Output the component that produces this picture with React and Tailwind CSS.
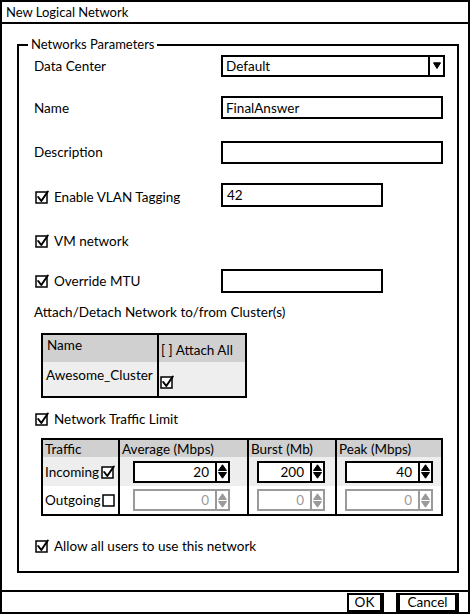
import React from "react";

function Check({ checked = true }) {
  return (
    <svg width="14" height="14" viewBox="0 0 14 14" className="shrink-0">
      <rect x="1" y="2" width="11" height="11" fill="white" stroke="black" strokeWidth="1.5" />
      {checked && (
        <path d="M3.2 7 L6.3 11 L12.8 1.5" fill="none" stroke="black" strokeWidth="2" strokeLinejoin="round" strokeLinecap="round" />
      )}
    </svg>
  );
}

function Arrows({ color }) {
  return (
    <svg width="9" height="15" viewBox="0 0 9 15">
      <path d="M0.5 6.5 L4.5 0.8 L8.5 6.5 Z" fill={color} stroke={color} strokeWidth="1" strokeLinejoin="round" />
      <path d="M0.5 8.5 L4.5 14.2 L8.5 8.5 Z" fill={color} stroke={color} strokeWidth="1" strokeLinejoin="round" />
    </svg>
  );
}

function Spinner({ value, w, ml, disabled }) {
  const c = disabled ? "border-[#9a9a9a] text-[#9a9a9a]" : "border-black text-black";
  return (
    <div className={`flex h-[22px] ${w} ${ml}`}>
      <div className={`flex-1 border-2 ${c} bg-white flex items-center justify-end pr-[6px]`}>{value}</div>
      <div className={`w-[13px] border-2 border-l-0 ${c} bg-white flex items-center justify-center`}>
        <Arrows color={disabled ? "#9a9a9a" : "#000"} />
      </div>
    </div>
  );
}

function CheckRow({ label, mt, h, children, labelPt = "" }) {
  return (
    <div className={`flex items-center ${mt} ${h}`}>
      <div className={`w-[187px] shrink-0 flex items-center gap-[5px] pl-[1px] whitespace-nowrap ${labelPt}`}>
        <Check />
        <span>{label}</span>
      </div>
      {children}
    </div>
  );
}

export default function App() {
  return (
    <div className="w-[472px] h-[616px] bg-white font-['Lato',sans-serif] text-[13.5px] leading-[18px] text-black">
      <div className="w-[470px] h-[614px] border-2 border-black flex flex-col">
        <div className="h-[22px] border-b-2 border-black flex items-center pl-[4px] text-[13px]">New Logical Network</div>
        <div className="flex-1 pl-[15px] pt-[20px]">
          <div className="relative w-[442px] h-[529px] border-2 border-black">
            <span className="absolute left-[9px] -top-[11px] bg-white px-[3px] leading-[18px] text-[13px]">Networks Parameters</span>
            <div className="flex flex-col pl-[15px]">
              <div className="flex items-center mt-[8px] h-[23px]">
                <div className="w-[187px] shrink-0">Data Center</div>
                <div className="w-[224px] h-[22px] border-2 border-black flex">
                  <div className="flex-1 flex items-center pl-[3px]">Default</div>
                  <div className="w-[15px] border-l-2 border-black flex items-center justify-center">
                    <svg width="8" height="7" viewBox="0 0 8 7"><path d="M0.5 0.8 L7.5 0.8 L4 6.5 Z" fill="black" stroke="black" strokeLinejoin="round" /></svg>
                  </div>
                </div>
              </div>
              <div className="flex items-center mt-[19px] h-[23px]">
                <div className="w-[187px] shrink-0">Name</div>
                <div className="w-[222px] h-[23px] border-2 border-black flex items-center pl-[3px]">FinalAnswer</div>
              </div>
              <div className="flex items-center mt-[22px] h-[23px]">
                <div className="w-[187px] shrink-0 -mt-[2px]">Description</div>
                <div className="w-[222px] h-[23px] border-2 border-black" />
              </div>
              <CheckRow label="Enable VLAN Tagging" mt="mt-[19px]" h="h-[24px]" labelPt="pt-[4px]">
                <div className="w-[162px] h-[24px] border-2 border-black flex items-center pl-[4px]">42</div>
              </CheckRow>
              <CheckRow label="VM network" mt="mt-[23px]" h="h-[22px]" />
              <CheckRow label="Override MTU" mt="mt-[17px]" h="h-[24px]">
                <div className="w-[162px] h-[24px] border-2 border-black" />
              </CheckRow>
              <div className="mt-[10px] h-[18px] flex items-center whitespace-nowrap">Attach/Detach Network to/from Cluster(s)</div>
              <div className="mt-[12px] ml-[7px] w-[206px] border-2 border-black">
                <div className="flex h-[27px] bg-[#d0d0d0]">
                  <div className="w-[116px] border-r-2 border-black pl-[4px] pt-[1px]">Name</div>
                  <div className="flex-1 flex items-center pl-[2px] pt-[3px] whitespace-nowrap">[ ] Attach All</div>
                </div>
                <div className="flex h-[34px] bg-[#eeeeee]">
                  <div className="w-[116px] border-r-2 border-black pl-[3px] pt-[4px] whitespace-nowrap">Awesome_Cluster</div>
                  <div className="flex-1 flex items-center pl-[1px] pt-[6px]"><Check /></div>
                </div>
              </div>
              <CheckRow label="Network Traffic Limit" mt="mt-[12px]" h="h-[18px]" />
              <div className="mt-[10px] ml-[7px] w-[402px] border-2 border-black grid grid-cols-[77px_129px_88px_1fr]">
                <div className="h-[17px] bg-[#d0d0d0] border-r-2 border-black pl-[2px] flex items-center">Traffic</div>
                <div className="h-[17px] bg-[#d0d0d0] border-r-2 border-black pl-[2px] flex items-center whitespace-nowrap">Average (Mbps)</div>
                <div className="h-[17px] bg-[#d0d0d0] border-r-2 border-black pl-[2px] flex items-center whitespace-nowrap">Burst (Mb)</div>
                <div className="h-[17px] bg-[#d0d0d0] pl-[2px] flex items-center whitespace-nowrap">Peak (Mbps)</div>

                <div className="h-[29px] bg-[#eeeeee] border-r-2 border-black pl-[2px] flex items-center gap-[2px]">Incoming<Check /></div>
                <div className="h-[29px] bg-[#eeeeee] border-r-2 border-black flex items-center">
                  <Spinner value="20" w="w-[97px]" ml="ml-[13px]" />
                </div>
                <div className="h-[29px] bg-[#eeeeee] border-r-2 border-black flex items-center">
                  <Spinner value="200" w="w-[68px]" ml="ml-[8px]" />
                </div>
                <div className="h-[29px] bg-[#eeeeee] flex items-center">
                  <Spinner value="40" w="w-[88px]" ml="ml-[8px]" />
                </div>

                <div className="h-[28px] bg-white border-r-2 border-black pl-[2px] flex items-center gap-[2px]">Outgoing<Check checked={false} /></div>
                <div className="h-[28px] bg-white border-r-2 border-black flex items-center">
                  <Spinner value="0" w="w-[97px]" ml="ml-[13px]" disabled />
                </div>
                <div className="h-[28px] bg-white border-r-2 border-black flex items-center">
                  <Spinner value="0" w="w-[68px]" ml="ml-[8px]" disabled />
                </div>
                <div className="h-[28px] bg-white flex items-center">
                  <Spinner value="0" w="w-[88px]" ml="ml-[8px]" disabled />
                </div>
              </div>
              <CheckRow label="Allow all users to use this network" mt="mt-[21px]" h="h-[18px]" />
            </div>
          </div>
        </div>
        <div className="h-[22px] border-t-2 border-black flex items-center justify-end pr-[9px] gap-[12px]">
          <div className="w-[37px] h-[19px] border-2 border-r-4 border-black flex items-center justify-center">OK</div>
          <div className="w-[63px] h-[19px] border-2 border-x-4 border-black flex items-center justify-center">Cancel</div>
        </div>
      </div>
    </div>
  );
}
